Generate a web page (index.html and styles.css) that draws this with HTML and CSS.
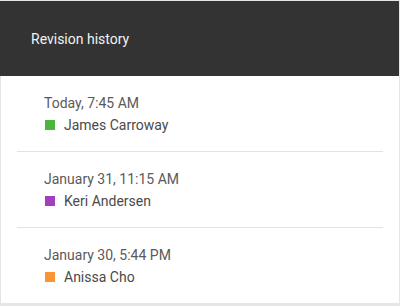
FILE: index.html
```html
<!DOCTYPE html>
<html lang="en">
<head>
  <meta charset="UTF-8">
  <meta name="viewport" content="width=device-width, initial-scale=1.0">
  <title>Revision history</title>
  <link rel="stylesheet" href="styles.css">
</head>
<body>
  <div class="card">
    <div class="header">Revision history</div>

    <ul class="history">
      <li class="entry">
        <div class="when">Today, 7:45 AM</div>
        <div class="who"><span class="swatch green"></span>James Carroway</div>
      </li>
      <li class="entry">
        <div class="when">January 31, 11:15 AM</div>
        <div class="who"><span class="swatch purple"></span>Keri Andersen</div>
      </li>
      <li class="entry">
        <div class="when">January 30, 5:44 PM</div>
        <div class="who"><span class="swatch orange"></span>Anissa Cho</div>
      </li>
    </ul>
  </div>
</body>
</html>
```

FILE: styles.css
```css
body {
  margin: 0;
  background: #e6e6e6;
  font-family: Roboto, "Liberation Sans", sans-serif;
}
.card {
  margin: 1px 1px 0 0;
  height: 302px;
  background: white;
  overflow: hidden;
}
.header {
  height: 75px;
  display: flex;
  align-items: center;
  padding-left: 31px;
  background: #333;
  color: #f2f2f2;
  font-size: 14px;
}
.history {
  list-style: none;
  margin: 0;
  padding: 0 16px;
  height: 227px;
  border-left: 1px solid #e3e3e3;
}
.entry {
  height: 76px;
  box-sizing: border-box;
  padding: 16px 0 0 27px;
  border-bottom: 1px solid #e3e3e3;
  line-height: 22px;
  font-size: 14px;
}
.entry:last-child {
  border-bottom: none;
}
.when {
  color: #5a5a5a;
}
.who {
  display: flex;
  align-items: center;
  color: #4a4a4a;
}
.swatch {
  width: 10px;
  height: 10px;
  margin: 0 9px 0 1px;
}
.green { background: #4cb53c; }
.purple { background: #a23fbd; }
.orange { background: #fb9533; }
```
